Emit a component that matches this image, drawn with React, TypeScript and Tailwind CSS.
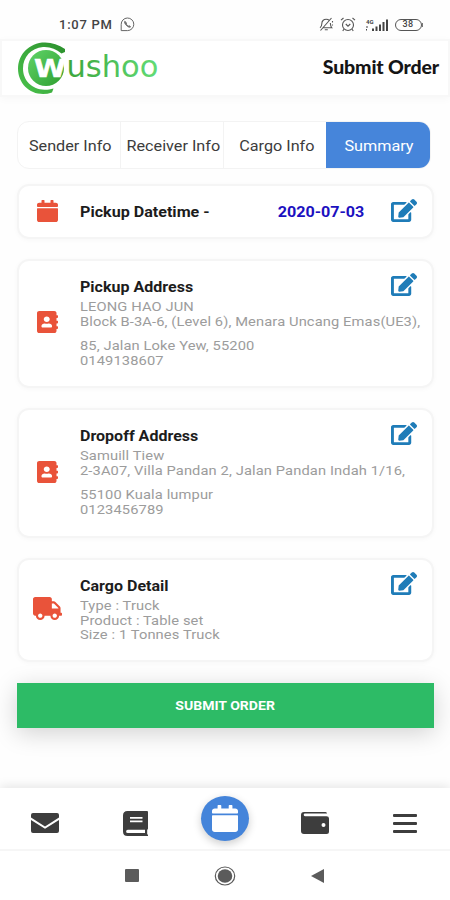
import type { ReactNode } from "react";
import { FaAddressBook, FaCalendar, FaEdit, FaTruck } from "react-icons/fa";

const tabs = [
  { label: "Sender Info", className: "w-[103px] border-r border-[#f3f3f3]" },
  { label: "Receiver Info", className: "w-[103px] border-r border-[#f3f3f3]" },
  { label: "Cargo Info", className: "w-[102px]" },
];

function StatusBar() {
  return (
    <div className="flex h-[39px] items-center justify-between pt-[10px] pr-[27px] pl-[59px] text-[#444]">
      <div className="flex items-center gap-[6px]">
        <span className="w-[55px] text-[13px] font-medium tracking-[0.75px] whitespace-nowrap">
          1:07 PM
        </span>
        <svg width="15" height="15" viewBox="0 0 15 15" fill="none" stroke="#666">
          <path d="M1.2 13.6V7.5a6.3 6.3 0 1 1 6.3 6.1z" />
          <path d="M4.8 4.2c-.7 1 0 2.600 1.600 4.200s3.300 2.300 4.200 1.500L9.300 8.600l-1 .6-2.200-2.200.6-1z" strokeWidth="0.800" fill="#777" />
        </svg>
      </div>
      <div className="flex items-center">
        <svg width="15" height="15" viewBox="0 0 15 15" fill="none" stroke="#555" strokeWidth="1.100">
          <path d="M1 10.800c1.500-1 1.800-2 1.800-4C2.800 4 4.600 2.300 7.200 2.300c1.300 0 2.300.4 3 1.100M11.300 6c.2 2.500.3 3.500 1.500 4.800H4M5.800 12.800h3M1.500 13.500L12.500 1M13.500 4v1.500M13.500 7.500v1" />
        </svg>
        <svg className="ml-[6px]" width="16" height="15" viewBox="0 0 16 15" fill="none" stroke="#555" strokeWidth="1.100">
          <circle cx="8" cy="8" r="5.500" />
          <path d="M1 3.200L3.500 1M15 3.200L12.500 1M5.800 7L8 9.200 10.300 7M3.800 12.300L2.800 14M12.200 12.300l1 1.700" />
        </svg>
        <svg className="ml-[9px]" width="24" height="14" viewBox="0 0 24 14" fill="#444">
          <text x="1" y="5.500" fontSize="6" fontWeight="700" fontFamily="Roboto">4G</text>
          <path d="M1 8.500h2v1H1zM1 11h1v1.500H1zM7 10.500h2V13H7zM10.500 8.500h2V13h-2zM14 6.500h2V13h-2zM17.500 4h2v9h-2zM21 1.500h2V13h-2z" />
        </svg>
        <div className="ml-[6px] flex h-[12px] w-[27px] items-center justify-center rounded-full border border-[#555] text-[9px] leading-none font-medium tracking-[0.5px]">
          38
        </div>
        <div className="h-[4px] w-[1.5px] bg-[#777]" />
      </div>
    </div>
  );
}

function Logo() {
  return (
    <svg width="144" height="56" viewBox="0 0 144 56">
      <defs>
        <linearGradient id="ring" x1="0" y1="1" x2="1" y2="0">
          <stop offset="0" stopColor="#4bc44d" />
          <stop offset="1" stopColor="#2b8f2c" />
        </linearGradient>
        <linearGradient id="disc" x1="0" y1="0" x2="1" y2="1">
          <stop offset="0" stopColor="#5fd468" />
          <stop offset="1" stopColor="#2f9e30" />
        </linearGradient>
        <linearGradient id="word" x1="0" y1="0" x2="1" y2="0">
          <stop offset="0" stopColor="#3ba53b" />
          <stop offset="1" stopColor="#62dc76" />
        </linearGradient>
      </defs>
      <path
        d="M50 9C43 4 35 1.800 27 2.600C11 5 3 17 3 28.500C3 43 14 54 28 54C31 54 34 53.500 37 52.500L38.500 48.500C35 49.500 32 49.800 29.500 49.700C17 49.500 8 40.500 8 28.500C8 17 16 8 28 7C35 6.500 41 9 46.500 13.500L50 12Z"
        fill="url(#ring)"
      />
      <circle cx="31" cy="28" r="18" fill="url(#disc)" />
      <text x="19" y="37" fontFamily="DejaVu Sans" fontWeight="700" fontSize="25" fill="#fff" stroke="#fff" strokeWidth="0.500" textLength="32" lengthAdjust="spacingAndGlyphs">
        W
      </text>
      <text x="51.500" y="37" fontFamily="DejaVu Sans" fontSize="29.500" fill="url(#word)" textLength="92" lengthAdjust="spacingAndGlyphs">
        ushoo
      </text>
    </svg>
  );
}

function Header() {
  return (
    <header className="flex h-[58px] items-center justify-between border-2 border-[#f8f8f8] bg-white pr-[9px] pl-[13px] shadow-[0_2px_8px_rgba(0,0,0,0.03)]">
      <Logo />
      <h1 className="pb-[3px] font-['Lato'] text-[19.5px] font-black tracking-[-0.15px] text-[#151515]">
        Submit Order
      </h1>
    </header>
  );
}

function EditButton() {
  return (
    <button type="button" className="block shrink-0 text-[#1f7cb8]">
      <FaEdit className="block h-[23px] w-[26px]" preserveAspectRatio="none" />
    </button>
  );
}

interface CardProps {
  icon: ReactNode;
  title: string;
  lines: string[];
  className: string;
}

function InfoCard({ icon, title, lines, className }: CardProps) {
  return (
    <section
      className={`flex w-[417px] rounded-[12px] border-2 border-[#f5f5f5] bg-white shadow-[0_1px_5px_rgba(0,0,0,0.03)] ${className}`}
    >
      <div className="flex w-[56px] shrink-0 items-center justify-center pb-[3px] text-[#e9533a]">
        {icon}
      </div>
      <div className="relative w-[356px] pt-[17px] pl-[4.500px]">
        <h2 className="origin-left scale-x-[1.145] text-[14px] leading-[19px] font-bold text-[#1c1c1c]">
          {title}
        </h2>
        <div className="origin-left scale-x-[1.13] pt-[3px] text-[13px] leading-[14.500px] tracking-[0.1px] whitespace-pre text-[#9c9c9c]">
          {lines.map((line, i) => (
            <p key={line} className={lines.length === 4 && i === 2 ? "pt-[10px]" : ""}>
              {line}
            </p>
          ))}
        </div>
        <div className="absolute top-[12px] right-[14px]">
          <EditButton />
        </div>
      </div>
    </section>
  );
}

function BottomNav() {
  return (
    <nav className="flex h-[63px] items-center border-b-2 border-[#f6f6f6] bg-white text-[#3d3d3d] shadow-[0_-2px_10px_rgba(0,0,0,0.1)]">
      <div className="flex flex-1 justify-center pt-[9px]">
        <svg width="28" height="20" viewBox="0 0 28 20" fill="currentColor">
          <path d="M2 0h24q2 0 2 2v2.500L14 13.500 0 4.500V2q0-2 2-2zM0 7l14 8.800L28 7v11q0 2-2 2H2q-2 0-2-2z" />
        </svg>
      </div>
      <div className="flex flex-1 justify-center pt-[9px]">
        <svg width="25" height="25" viewBox="0 0 25 25" fill="currentColor">
          <path
            fillRule="evenodd"
            d="M4.500 0H24q1 0 1 1v16.500q0 1-.8 1.300v4.400q.8.200.8 1V25H4.500Q0 25 0 20.500V4.500Q0 0 4.500 0zM4.800 18.800q-1.700 0-1.700 1.600T4.800 22H22v-3.200zM7 6v1.700h12.500V6zM7 9.500v1.700h12.500V9.500z"
          />
        </svg>
      </div>
      <div className="flex flex-1 justify-center">
        <div className="flex h-[45px] w-[48px] items-center justify-center rounded-[50%] bg-[#4484da] text-white shadow-[0_3px_8px_rgba(0,0,0,0.2)]">
          <FaCalendar className="h-[27px] w-[26px]" preserveAspectRatio="none" />
        </div>
      </div>
      <div className="flex flex-1 justify-center pt-[9px]">
        <svg width="28" height="22" viewBox="0 0 28 22" fill="currentColor">
          <path
            fillRule="evenodd"
            d="M3 0h21.500q1.500 0 1.500 1.500H4Q2.700 1.500 2.700 2.800T4 4.200h21.500Q28 4.200 28 6.500V19.500q0 2.500-2.500 2.500H3q-3 0-3-3V3q0-3 3-3zM22.500 11a2 2 0 1 0 0 4 2 2 0 0 0 0-4z"
          />
        </svg>
      </div>
      <div className="flex flex-1 justify-center pt-[9px]">
        <div className="flex w-[24px] flex-col gap-[5px]">
          <span className="h-[3px] rounded-[1px] bg-current" />
          <span className="h-[3px] rounded-[1px] bg-current" />
          <span className="h-[3px] rounded-[1px] bg-current" />
        </div>
      </div>
    </nav>
  );
}

function SystemNav() {
  return (
    <div className="flex h-[49px] items-center bg-white pl-[125px] text-[#5b5b5b]">
      <div className="h-[13px] w-[14px] rounded-[1px] bg-current" />
      <svg className="ml-[75px]" width="22" height="20" viewBox="0 0 22 20">
        <ellipse cx="11" cy="10" rx="9.700" ry="9" fill="none" stroke="currentColor" strokeWidth="1.200" />
        <ellipse cx="11" cy="10" rx="7.300" ry="6.800" fill="currentColor" />
      </svg>
      <svg className="ml-[75px]" width="13" height="14" viewBox="0 0 13 14" fill="currentColor">
        <path d="M13 0v14L0 7z" />
      </svg>
    </div>
  );
}

export default function App() {
  return (
    <div className="flex h-[900px] w-[450px] flex-col overflow-hidden bg-[#fefefe] font-['Roboto',sans-serif]">
      <StatusBar />
      <Header />

      <main className="flex flex-1 flex-col pt-[24px] pl-[17px]">
        <div className="flex h-[48px] w-[414px] overflow-hidden rounded-[12px] border border-[#f3f3f3] bg-white text-[15px] text-[#3c3c3c]">
          {tabs.map((tab) => (
            <div
              key={tab.label}
              className={`flex items-center justify-center pt-[2px] pl-[3px] whitespace-nowrap ${tab.className}`}
            >
              <span className="scale-x-[1.08]">{tab.label}</span>
            </div>
          ))}
          <div className="-my-px -mr-px flex flex-1 items-center justify-center bg-[#4685da] pt-[2px] text-white">
            <span className="scale-x-[1.08]">Summary</span>
          </div>
        </div>

        <section className="mt-[15px] flex h-[55px] w-[417px] items-center rounded-[12px] border-2 border-[#f5f5f5] bg-white shadow-[0_1px_5px_rgba(0,0,0,0.03)]">
          <div className="flex w-[56px] justify-center pb-[2px] text-[#e9533a]">
            <FaCalendar className="h-[22px] w-[21px]" preserveAspectRatio="none" />
          </div>
          <h2 className="ml-[4.500px] origin-left scale-x-[1.15] pt-[1px] text-[14px] font-bold text-[#1c1c1c]">
            Pickup Datetime -
          </h2>
          <span className="mr-[27px] ml-auto origin-right scale-x-[1.15] pt-[1px] text-[14px] font-bold text-[#1b10c0]">
            2020-07-03
          </span>
          <div className="pr-[15px] pb-[3px]">
            <EditButton />
          </div>
        </section>

        <InfoCard
          className="mt-[20px] h-[129px]"
          icon={<FaAddressBook className="h-[22px] w-[21px]" preserveAspectRatio="none" />}
          title="Pickup Address"
          lines={[
            "LEONG HAO JUN",
            "Block B-3A-6, (Level 6), Menara Uncang Emas(UE3),",
            "85, Jalan Loke Yew, 55200",
            "0149138607",
          ]}
        />

        <InfoCard
          className="mt-[20px] h-[130px]"
          icon={<FaAddressBook className="h-[22px] w-[21px]" preserveAspectRatio="none" />}
          title="Dropoff Address"
          lines={[
            "Samuill Tiew",
            "2-3A07, Villa Pandan 2, Jalan Pandan Indah 1/16,",
            "55100 Kuala lumpur",
            "0123456789",
          ]}
        />

        <InfoCard
          className="mt-[20px] h-[104px]"
          icon={<FaTruck className="h-[23px] w-[29px]" preserveAspectRatio="none" />}
          title="Cargo Detail"
          lines={["Type : Truck", "Product : Table set", "Size : 1 Tonnes Truck"]}
        />

        <button
          type="button"
          className="mt-[21px] h-[45px] w-[417px] bg-[#2dbb66] text-[13px] font-bold text-white shadow-[0_5px_24px_rgba(0,0,0,0.18)]"
        >
          <span className="inline-block scale-x-[1.08]">SUBMIT ORDER</span>
        </button>
      </main>

      <BottomNav />
      <SystemNav />
    </div>
  );
}
